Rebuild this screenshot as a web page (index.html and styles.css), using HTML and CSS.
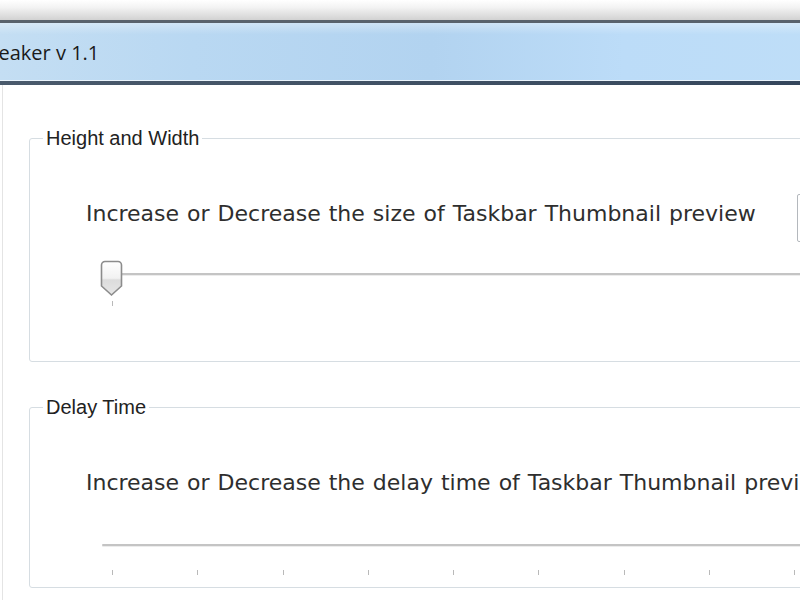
FILE: index.html
```html
<!DOCTYPE html>
<html lang="en">
<head>
    <meta charset="UTF-8">
    <title>Thumbnail Tweaker v 1.1</title>
    <link rel="stylesheet" href="styles.css">
</head>
<body>

    <div class="window">
        <div class="frame-top"></div>
        <div class="titlebar">
            <span class="title">Tweaker v 1.1</span>
        </div>
        <div class="titlebar-edge"></div>

        <div class="client">
            <fieldset class="group size-group">
                <legend>Height and Width</legend>
                <div class="row">
                    <span class="label">Increase or Decrease the size of Taskbar Thumbnail preview</span>
                    <span class="spin"></span>
                </div>
                <div class="slider">
                    <div class="track"></div>
                    <svg class="thumb" width="23" height="37" viewBox="0 0 23 37">
                        <defs>
                            <linearGradient id="thumbFill" x1="0" y1="0" x2="0" y2="1">
                                <stop offset="0" stop-color="#ffffff"/>
                                <stop offset="0.5" stop-color="#f2f2f2"/>
                                <stop offset="0.55" stop-color="#dcdcdc"/>
                                <stop offset="1" stop-color="#e6e6e6"/>
                            </linearGradient>
                        </defs>
                        <path d="M5 1.5 H18 A3.5 3.5 0 0 1 21.5 5 V26 L11.5 35 L1.5 26 V5 A3.5 3.5 0 0 1 5 1.5 Z" fill="url(#thumbFill)" stroke="#8c8c8c" stroke-width="1.6"/>
                    </svg>
                </div>
                <div class="ticks">
                    <span class="tick"></span>
                </div>
            </fieldset>

            <fieldset class="group delay-group">
                <legend>Delay Time</legend>
                <div class="row">
                    <span class="label">Increase or Decrease the delay time of Taskbar Thumbnail preview</span>
                </div>
                <div class="slider">
                    <div class="track track-full"></div>
                </div>
                <div class="ticks">
                    <span class="tick"></span>
                    <span class="tick"></span>
                    <span class="tick"></span>
                    <span class="tick"></span>
                    <span class="tick"></span>
                    <span class="tick"></span>
                    <span class="tick"></span>
                    <span class="tick"></span>
                    <span class="tick"></span>
                    <span class="tick"></span>
                </div>
            </fieldset>
        </div>
    </div>

</body>
</html>
```

FILE: styles.css
```css
* {
    margin: 0;
    padding: 0;
    box-sizing: border-box;
}

body {
    width: 800px;
    height: 600px;
    overflow: hidden;
    background: #ffffff;
    font-family: 'DejaVu Sans', Verdana, sans-serif;
    color: #2e2e2e;
}

.window {
    width: 960px;
    height: 600px;
    overflow: hidden;
}

/* glass frame above the caption */
.frame-top {
    height: 23px;
    background: linear-gradient(to bottom, #ffffff 0%, #f4f4f4 35%, #d2d2d2 100%);
    border-bottom: 3px solid #59626c;
}

.titlebar {
    height: 58px;
    display: flex;
    align-items: center;
    background:
        linear-gradient(to bottom, rgba(255, 255, 255, 0.35) 0%, rgba(255, 255, 255, 0) 20%),
        linear-gradient(to right, #c4def3 0%, #b9d8f2 20%, #b2d3f0 45%, #bcdcf8 65%, #c0dff8 100%);
    border-bottom: 1px solid #eaf4fc;
}

.title {
    font-family: 'Open Sans', 'Noto Sans', sans-serif;
    font-size: 20px;
    color: #1a1a1a;
    margin-left: -28px;
    margin-top: 2px;
}

.titlebar-edge {
    height: 4px;
    background: linear-gradient(to right, #4a5a6c 0%, #3c4d61 60%, #2f4158 100%);
}

.client {
    margin-left: 2px;
    border-left: 1px solid #e4e4e4;
    padding-left: 26px;
    padding-top: 43px;
    height: 515px;
}

.group {
    border: 1px solid #d6dde2;
    border-radius: 3px;
    padding: 0;
    min-width: 0;
}

.group legend {
    margin-left: 13px;
    padding: 0 3px;
    font-family: 'Liberation Sans', Arial, sans-serif;
    font-size: 20px;
    line-height: 20px;
    color: #222222;
}

.size-group {
    padding-bottom: 55px;
}

.delay-group {
    margin-top: 35px;
    padding-bottom: 12px;
}

.row {
    display: flex;
    align-items: flex-start;
    padding-left: 56px;
    margin-top: 46px;
    height: 48px;
}

.delay-group .row {
    margin-top: 53px;
    height: 26px;
}

.label {
    width: 711px;
    flex-shrink: 0;
    font-size: 22px;
    word-spacing: 1px;
    line-height: 26px;
    margin-top: 7px;
    white-space: nowrap;
}

.delay-group .label {
    margin-top: 0;
}

.spin {
    width: 80px;
    height: 48px;
    border: 1px solid #b4b8bd;
    border-radius: 2px;
    background: #ffffff;
}

.slider {
    position: relative;
    height: 38px;
    margin-top: 17px;
}

.delay-group .slider {
    height: 30px;
    margin-top: 34px;
}

.track {
    position: absolute;
    left: 82px;
    right: 0;
    top: 14px;
    height: 2px;
    background: #c4c4c4;
    box-shadow: 0 1px 0 #ececec;
}

.track-full {
    left: 72px;
    border-radius: 1px 0 0 1px;
}

/* thumb sits over the track */
.thumb {
    position: absolute;
    left: 70px;
    top: 1px;
}

.ticks {
    display: flex;
    gap: 84.3px;
    padding-left: 82px;
    margin-top: 4px;
    height: 5px;
}

.delay-group .ticks {
    margin-top: 10px;
}

.tick {
    width: 1px;
    height: 5px;
    background: #b9b9b9;
    flex-shrink: 0;
}
```
